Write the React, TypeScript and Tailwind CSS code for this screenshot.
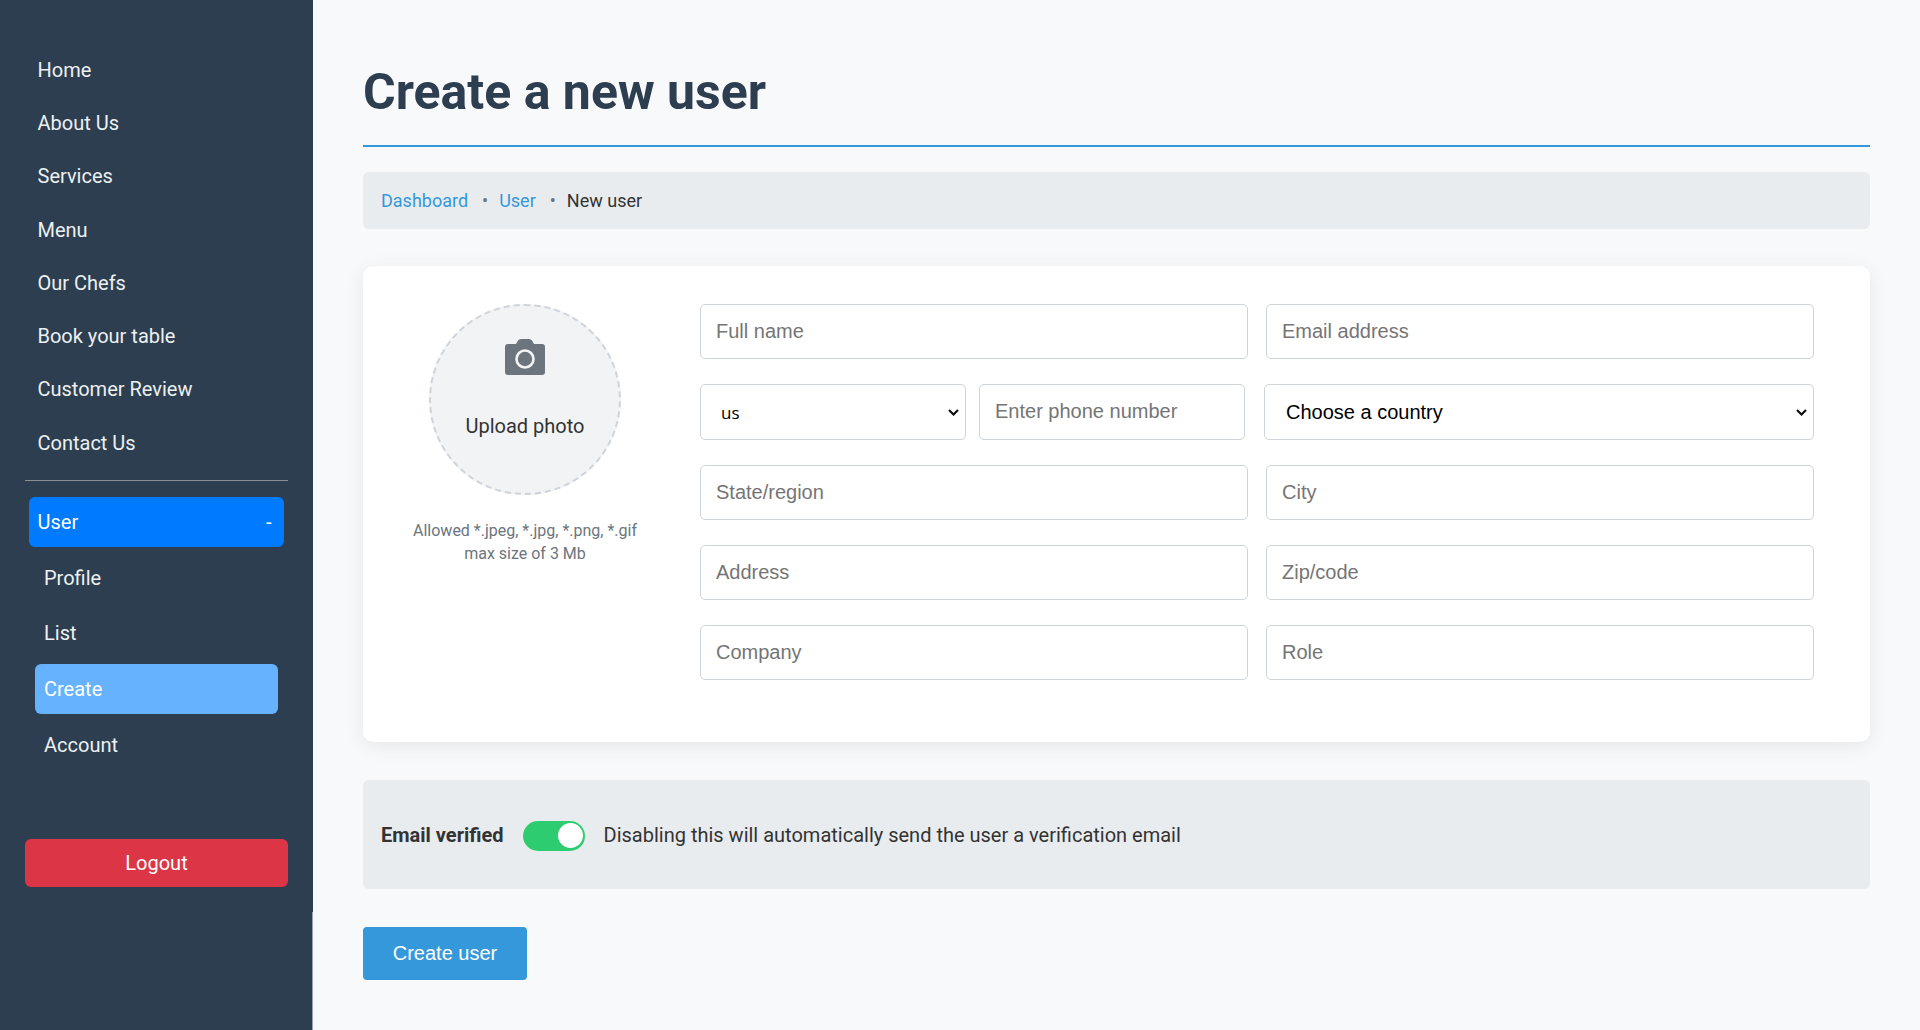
const navLinks = ["Home", "About Us", "Services", "Menu", "Our Chefs", "Book your table", "Customer Review", "Contact Us"];

function TextInput({ placeholder }: { placeholder: string }) {
  return (
    <input
      type="text"
      placeholder={placeholder}
      className="h-[55px] w-full rounded-[5px] border border-[#ced4da] bg-white px-[15px] font-['Liberation_Sans'] text-[20px] text-[#333] placeholder:text-[#757575]"
    />
  );
}

function SelectArrow() {
  return (
    <svg viewBox="0 0 11 7" className="pointer-events-none absolute top-[25px] right-[7px] h-[7px] w-[11px]">
      <path d="M1 1 L5.5 5.5 L10 1" fill="none" stroke="#111" strokeWidth="2.2" />
    </svg>
  );
}

export default function App() {
  return (
    <div className="relative flex h-[1030px] overflow-hidden bg-[#f8f9fa] font-['Roboto',sans-serif] text-[#333]">
      {/* Sidebar */}
      <aside className="flex w-[313px] shrink-0 flex-col bg-[#2c3e50] px-[25px] pt-[43.2px] text-[20px] text-[#ecf0f1]">
        <nav className="flex flex-col">
          {navLinks.map((link) => (
            <a key={link} className="flex h-[53.25px] items-center px-[12.5px]">
              {link}
            </a>
          ))}
        </nav>
        <hr className="mt-[10.6px] border-t border-[#8a8f94]" />
        <div className="mx-[4px] mt-[16px] flex h-[50px] items-center justify-between rounded-[6px] bg-[#007bff] px-[8.5px] text-white">
          <span>User</span>
          <span className="pr-[4px]">-</span>
        </div>
        <div className="mx-[10px] mt-[6px] flex flex-col gap-[5.7px]">
          <a className="flex h-[50px] items-center px-[9px]">Profile</a>
          <a className="flex h-[50px] items-center px-[9px]">List</a>
          <a className="flex h-[50px] items-center rounded-[6px] bg-[#66b2ff] px-[9px] text-white">Create</a>
          <a className="flex h-[50px] items-center px-[9px]">Account</a>
        </div>
        <button className="mt-[69px] h-[48px] rounded-[6px] bg-[#dc3545] text-white">Logout</button>
      </aside>
      <span className="absolute top-[912px] left-[312px] h-[118px] w-px bg-[#9aa3ad]" />

      {/* Main */}
      <main className="flex-1 px-[50px] pt-[60px]">
        <h1 className="border-b-2 border-[#3498db] pb-[20px] text-[50px] leading-[65px] font-bold text-[#2c3e50]">
          Create a new user
        </h1>

        <div className="mt-[25px] flex h-[57px] items-center rounded-[6px] bg-[#e9ecef] px-[18px] text-[18px]">
          <a className="text-[#3498db]">Dashboard</a>
          <span className="mr-[11px] ml-[14px] text-[#6c757d]">•</span>
          <a className="text-[#3498db]">User</a>
          <span className="mr-[11px] ml-[14px] text-[#6c757d]">•</span>
          <span>New user</span>
        </div>

        <section className="mt-[37px] flex h-[476px] rounded-[10px] bg-white pt-[38px] pr-[56px] pl-[33px] shadow-[0_4px_20px_rgba(0,0,0,0.08)]">
          <div className="flex w-[258px] shrink-0 flex-col items-center">
            <div className="flex h-[191px] w-[192px] flex-col items-center rounded-full border-2 border-dashed border-[#ced4da] bg-[#f1f3f5] pt-[33px]">
              <svg viewBox="0 0 40 36" className="h-[36px] w-[40px]">
                <path
                  fill="#6c757d"
                  d="M11 5 L13 1.5 Q14 0 16 0 H24 Q26 0 27 1.5 L29 5 H37 Q40 5 40 8 V33 Q40 36 37 36 H3 Q0 36 0 33 V8 Q0 5 3 5 Z"
                />
                <circle cx="20" cy="20" r="8.5" fill="#6c757d" stroke="#f1f3f5" strokeWidth="2.6" />
              </svg>
              <span className="mt-[36px] text-[20px] leading-[30px]">Upload photo</span>
            </div>
            <p className="mt-[24px] text-center text-[16px] leading-[23px] text-[#6c757d]">
              Allowed *.jpeg, *.jpg, *.png, *.gif
              <br />
              max size of 3 Mb
            </p>
          </div>

          <div className="ml-[46px] flex flex-1 flex-col gap-[25px]">
            <div className="grid grid-cols-2 gap-[18px]">
              <TextInput placeholder="Full name" />
              <TextInput placeholder="Email address" />
            </div>
            <div className="flex h-[56px] gap-[19px]">
              <div className="flex w-[545px] shrink-0 gap-[12px]">
                <div className="relative h-full w-[266px]">
                  <select className="h-full w-full appearance-none rounded-[5px] border border-[#ced4da] bg-white pt-[1px] pl-[20px] font-['Open_Sans'] text-[17px] text-black">
                    <option>us</option>
                  </select>
                  <SelectArrow />
                </div>
                <input
                  type="text"
                  placeholder="Enter phone number"
                  className="ml-[1px] h-full w-[266px] rounded-[5px] border border-[#ced4da] bg-white px-[15px] pb-[2px] font-['Liberation_Sans'] text-[20px] placeholder:text-[#757575]"
                />
              </div>
              <div className="relative h-full flex-1">
                <select className="h-full w-full appearance-none rounded-[5px] border border-[#ced4da] bg-white pl-[21px] font-['Liberation_Sans'] text-[20px] text-black">
                  <option>Choose a country</option>
                </select>
                <SelectArrow />
              </div>
            </div>
            <div className="grid grid-cols-2 gap-[18px]">
              <TextInput placeholder="State/region" />
              <TextInput placeholder="City" />
            </div>
            <div className="grid grid-cols-2 gap-[18px]">
              <TextInput placeholder="Address" />
              <TextInput placeholder="Zip/code" />
            </div>
            <div className="grid grid-cols-2 gap-[18px]">
              <TextInput placeholder="Company" />
              <TextInput placeholder="Role" />
            </div>
          </div>
        </section>

        <div className="mt-[38px] flex h-[109px] items-center rounded-[6px] bg-[#e9ecef] px-[18px] pt-[2px] text-[20px]">
          <span className="pb-[2px] font-bold">Email verified</span>
          <span className="ml-[19px] flex h-[30px] w-[62px] items-center justify-end rounded-full bg-[#2ecc71] pr-[2px]">
            <span className="size-[25px] rounded-full bg-white" />
          </span>
          <span className="ml-[19px] pb-[2px]">Disabling this will automatically send the user a verification email</span>
        </div>

        <button className="mt-[38px] h-[53px] w-[164px] rounded-[4px] bg-[#3498db] pb-[2px] font-['Liberation_Sans'] text-[20px] text-white">
          Create user
        </button>
      </main>
    </div>
  );
}
